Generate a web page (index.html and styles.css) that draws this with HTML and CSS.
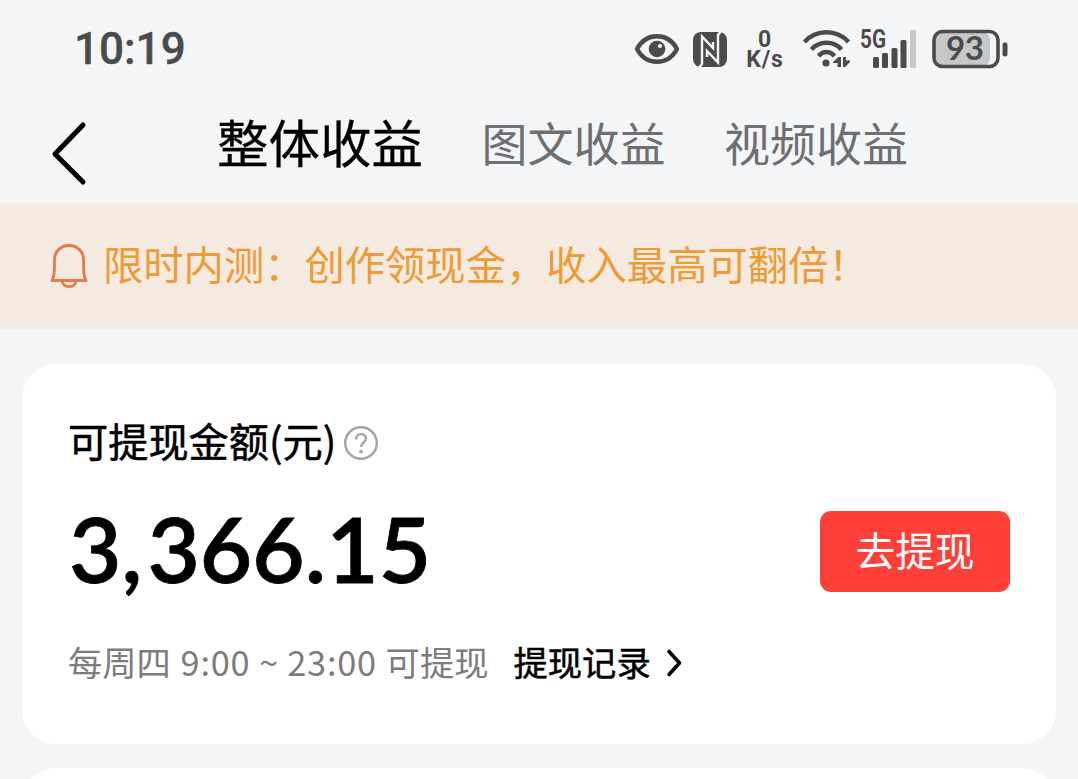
FILE: index.html
```html
<!DOCTYPE html>
<html lang="zh-CN">
<head>
	<meta charset="utf-8">
	<meta name="viewport" content="width=device-width, initial-scale=1">
	<title>整体收益</title>
	<link rel="stylesheet" href="styles.css">
</head>
<body>
	<div class="status-bar">
		<span class="time">10:19</span>
		<div class="status-icons">
			<svg class="icon-eye" width="46" height="32" viewBox="0 0 46 32">
				<path d="M3 16C12 -1 34 -1 43 16C34 33 12 33 3 16Z" fill="none" stroke="#4b4b4b" stroke-width="4.4" stroke-linejoin="round"/>
				<circle cx="23" cy="16" r="8.3" fill="#4b4b4b"/>
				<circle cx="26" cy="13" r="2" fill="#f3f5f7"/>
			</svg>
			<svg class="icon-nfc" width="34" height="35" viewBox="0 0 34 35">
				<rect width="34" height="35" rx="8" fill="#4b4b4b"/>
				<g fill="none" stroke="#f3f5f7" stroke-width="2.4">
					<path d="M5.500 36.500L9 32V4.500L20 16V10"/>
					<path d="M28.500 -1.500L25 3V30.500L14 19V25"/>
				</g>
			</svg>
			<div class="speed">
				<span>0</span>
				<span>K/s</span>
			</div>
			<svg class="icon-wifi" width="48" height="40" viewBox="0 0 48 40">
				<g fill="none" stroke="#4b4b4b" stroke-width="4.5">
					<path d="M1.500 13C13 0 34 0 45.500 13"/>
					<path d="M8.500 20.500C16 11.500 31 11.500 38.500 20.500"/>
					<path d="M15.500 27C20 21.500 27 21.500 31.500 27"/>
				</g>
				<circle cx="23" cy="34" r="3.600" fill="#4b4b4b"/>
				<path d="M38 28V38H34.500V34H30V33L35.500 28Z M40 38V28H43V31.500H47V33L42 38Z" fill="#4b4b4b"/>
			</svg>
			<svg class="icon-signal" width="58" height="42" viewBox="0 0 58 42">
				<text x="1" y="20" class="net-type" textLength="26" lengthAdjust="spacingAndGlyphs">5G</text>
				<g fill="#4b4b4b">
					<rect x="14" y="29" width="6" height="11" rx="1.500"/>
					<rect x="23" y="25" width="6" height="15" rx="1.500"/>
					<rect x="32.500" y="20" width="6" height="20" rx="1.500"/>
					<rect x="41.500" y="12" width="6" height="28" rx="1.500"/>
				</g>
				<rect x="51" y="2" width="6" height="38" rx="1.500" fill="#c6c7c8"/>
			</svg>
			<svg class="icon-battery" width="76" height="40" viewBox="0 0 76 40">
				<rect x="2" y="3" width="56" height="34" rx="8" fill="#c6c7c8"/>
				<rect x="2" y="2.500" width="64" height="35" rx="8.500" fill="none" stroke="#4b4b4b" stroke-width="3.600"/>
				<rect x="70.500" y="13.500" width="5" height="14" rx="2.200" fill="#4b4b4b"/>
				<text x="14" y="31" class="battery-level" textLength="38">93</text>
			</svg>
		</div>
	</div>

	<div class="nav">
		<svg class="back" width="40" height="66" viewBox="0 0 40 66">
			<path d="M33 4L5 33L33 61" fill="none" stroke="#000" stroke-width="5" stroke-linecap="round" stroke-linejoin="round"/>
		</svg>
		<div class="tabs">
			<span class="tab active">整体收益</span>
			<span class="tab">图文收益</span>
			<span class="tab">视频收益</span>
		</div>
	</div>

	<div class="notice">
		<svg width="38" height="46" viewBox="0 0 38 46">
			<g fill="none" stroke="#e27a4c" stroke-width="2.800" stroke-linejoin="round">
				<path d="M2 37.500C4 34 4.500 31 4.500 17C4.500 8 11 2.500 19 2.500S33.500 8 33.500 17C33.500 31 34 34 36 37.500Z"/>
				<path d="M12 38C13.500 45.500 24.500 45.500 26 38"/>
			</g>
		</svg>
		<span class="notice-text">限时内测：创作领现金，收入最高可翻倍！</span>
	</div>

	<div class="card">
		<div class="card-title">
			<span>可提现金额(元)</span>
			<svg width="36" height="36" viewBox="0 0 36 36">
				<circle cx="18" cy="18" r="15.800" fill="none" stroke="#a4a4a4" stroke-width="2.400"/>
				<path d="M13 14.500C13 7.500 23 7.500 23 13.500C23 17.500 18 17.500 18 22" fill="none" stroke="#a4a4a4" stroke-width="2.400"/>
				<circle cx="18" cy="26.500" r="1.900" fill="#a4a4a4"/>
			</svg>
		</div>
		<div class="card-main">
			<span class="amount">3<span class="comma">,</span>366.15</span>
			<button type="button" class="btn">去提现</button>
		</div>
		<div class="card-foot">
			<span class="rule">每周四 <span class="hours">9:00 ~ 23:00</span> 可提现</span>
			<span class="record">提现记录</span>
			<svg width="18" height="30" viewBox="0 0 18 30">
				<path d="M4 3.500L14.500 15L4 26.500" fill="none" stroke="#000" stroke-width="3.600" stroke-linecap="round" stroke-linejoin="round"/>
			</svg>
		</div>
	</div>

	<div class="card next"></div>
</body>
</html>
```
FILE: styles.css
```css
* {
	box-sizing: border-box;
}

body {
	display: flex;
	flex-direction: column;
	margin: 0;
	height: 779px;
	overflow: hidden;
	background-color: #f3f5f7;
	font-family: "Noto Sans CJK SC", sans-serif;
	color: #000;
	white-space: nowrap;
}

svg {
	display: block;
	flex: none;
	overflow: visible;
}

/* status bar */
.status-bar {
	display: flex;
	flex: none;
	justify-content: space-between;
	height: 100px;
	padding: 28px 70px 0 74px;
	color: #4b4b4b;
}

.time {
	font-family: Roboto, sans-serif;
	font-size: 44px;
	line-height: 43px;
	font-weight: 500;
	-webkit-text-stroke: 0.4px #4b4b4b;
}

.status-icons {
	display: flex;
	height: 42px;
	align-items: center;
}

.icon-eye {
	margin-right: 13px;
}

.icon-nfc {
	overflow: hidden;
}

.speed {
	display: flex;
	flex-direction: column;
	align-items: center;
	width: 42px;
	margin: 1px 0 0 17px;
	font: 700 23px/20px Roboto, sans-serif;
	letter-spacing: 0.8px;
}

.icon-wifi {
	margin-left: 17px;
}

.icon-signal {
	margin-left: 8px;
}

.icon-battery {
	margin-left: 15px;
}

.net-type {
	font: 700 25px Roboto, sans-serif;
	fill: #4b4b4b;
}

.battery-level {
	font: 700 33px Lato, sans-serif;
	fill: #4b4b4b;
}

/* tabs */
.nav {
	display: flex;
	flex: none;
	height: 103px;
	padding-left: 50px;
}

.back {
	margin-top: 21px;
}

.tabs {
	display: flex;
	align-items: center;
	height: 81px;
	margin-left: 127px;
	gap: 58.5px;
}

.tab {
	font-size: 46px;
	line-height: 60px;
	color: #6d6f72;
}

.tab.active {
	font-size: 51.5px;
	color: #000;
	-webkit-text-stroke: 0.3px #000;
}

/* notice */
.notice {
	display: flex;
	flex: none;
	align-items: center;
	height: 126px;
	padding-left: 50px;
	gap: 15px;
	background-color: #f4eadf;
	color: #ee9a35;
	font-size: 40.3px;
	line-height: 60px;
}

.notice-text {
	margin-bottom: 6px;
}

/* card */
.card {
	flex: none;
	height: 380px;
	margin: 35px 22px 0;
	padding: 48px 46px 0;
	border-radius: 34px;
	background-color: #fff;
}

.card-title {
	display: flex;
	align-items: center;
	gap: 7px;
	height: 60px;
	font-size: 40.2px;
	line-height: 60px;
	-webkit-text-stroke: 0.5px #000;
}

.card-title span {
	margin-bottom: 5px;
}

.card-title svg {
	margin-top: 2px;
}

.card-main {
	display: flex;
	justify-content: space-between;
	align-items: center;
	height: 158px;
}

.amount {
	margin: 0 0 7px 1px;
	font-family: Lato, sans-serif;
	font-size: 90.5px;
	font-weight: 600;
	line-height: 100px;
	-webkit-text-stroke: 0.8px #000;
}

.comma {
	letter-spacing: 5px;
}

.btn {
	width: 190px;
	height: 81px;
	padding: 0 0 5px;
	border: none;
	border-radius: 11px;
	background-color: #ff4039;
	color: #fff;
	font-family: inherit;
	font-size: 39.7px;
}

.card-foot {
	display: flex;
	align-items: center;
	height: 66px;
	font-size: 34.3px;
	line-height: 50px;
}

.rule {
	margin-bottom: 5px;
	color: #7c7c7c;
}

.hours {
	margin: 0 1px 0 2px;
	letter-spacing: 0.8px;
}

.record {
	margin: 0 14px 5px 25px;
	-webkit-text-stroke: 0.5px #000;
}

/* the following card runs on below the fold */
.next {
	margin-top: 24px;
}
```
